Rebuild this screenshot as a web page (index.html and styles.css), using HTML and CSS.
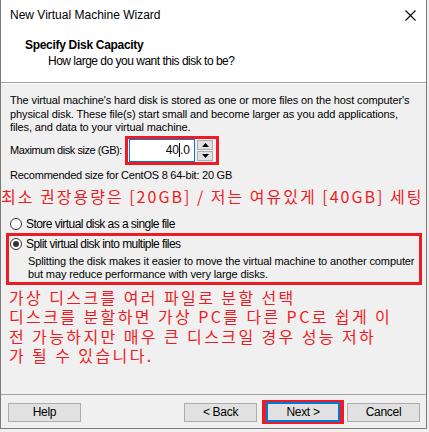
FILE: index.html
```html
<!DOCTYPE html>
<html>
<head>
<meta charset="utf-8">
<link rel="stylesheet" href="styles.css">
</head>
<body>
<div class="window">
  <div class="titlebar">
    <span class="title">New Virtual Machine Wizard</span>
    <svg class="close" width="11" height="11" viewBox="0 0 11 11"><path d="M0.5 0.5 L10.5 10.5 M10.5 0.5 L0.5 10.5" stroke="#000" stroke-width="1.1" fill="none"/></svg>
  </div>
  <div class="header">
    <div class="h-title">Specify Disk Capacity</div>
    <div class="h-sub">How large do you want this disk to be?</div>
  </div>
  <div class="content">
    <p class="intro">The virtual machine's hard disk is stored as one or more files on the host computer's<br>physical disk. These file(s) start small and become larger as you add applications,<br>files, and data to your virtual machine.</p>
    <div class="size-row">
      <span class="label">Maximum disk size (GB):</span>
      <div class="hl-box">
        <div class="input"><span>40</span><span class="caret"></span><span>.0</span></div>
        <div class="spin">
          <div class="spin-btn"><svg width="7" height="4" viewBox="0 0 7 4"><path d="M3.5 0 L7 4 L0 4 Z" fill="#000"/></svg></div>
          <div class="spin-btn"><svg width="7" height="4" viewBox="0 0 7 4"><path d="M0 0 L7 0 L3.5 4 Z" fill="#000"/></svg></div>
        </div>
      </div>
    </div>
    <p class="rec">Recommended size for CentOS 8 64-bit: 20 GB</p>
    <p class="note note1">최소 권장용량은 [20GB] / 저는 여유있게 [40GB] 세팅</p>
    <label class="radio-row first"><span class="radio"></span>Store virtual disk as a single file</label>
    <div class="hl-split">
      <label class="radio-row"><span class="radio checked"></span>Split virtual disk into multiple files</label>
      <p class="desc">Splitting the disk makes it easier to move the virtual machine to another computer<br>but may reduce performance with very large disks.</p>
    </div>
    <p class="note note2">가상 디스크를 여러 파일로 분할 선택<br>디스크를 분할하면 가상 PC를 다른 PC로 쉽게 이<br>전 가능하지만 매우 큰 디스크일 경우 성능 저하<br>가 될 수 있습니다.</p>
  </div>
  <div class="footer">
    <button class="btn">Help</button>
    <div class="spacer"></div>
    <button class="btn">&lt; Back</button>
    <div class="next-hl"><button class="btn btn-default">Next &gt;</button></div>
    <button class="btn">Cancel</button>
  </div>
</div>
</body>
</html>
```

FILE: styles.css
```css
html, body {
  margin: 0;
  padding: 0;
  background: #f0f0f0;
}
body {
  width: 429px;
  height: 432px;
  overflow: hidden;
  font-family: "Liberation Sans", Arial, sans-serif;
  color: #000;
}
.window {
  width: 427px;
  height: 429px;
  border-left: 1px solid #7a7a7a;
  border-right: 1px solid #7a7a7a;
  border-bottom: 1px solid #7a7a7a;
  background: #f0f0f0;
  display: flex;
  flex-direction: column;
  box-sizing: border-box;
}
.titlebar {
  height: 30px;
  flex: none;
  background: #fff;
  display: flex;
  align-items: center;
  padding: 0 9px;
}
.title {
  font-size: 12px;
  flex: 1;
  color: #000;
}
.close {
  margin-right: 1px;
}
.header {
  background: #fff;
  height: 53px;
  flex: none;
  border-bottom: 1px solid #a0a0a0;
  box-sizing: border-box;
  padding: 8px 0 0 24px;
}
.h-title {
  font-weight: bold;
  font-size: 12px;
  line-height: 15px;
  letter-spacing: -0.3px;
}
.h-sub {
  font-size: 12px;
  line-height: 15px;
  padding-left: 23px;
  margin-top: 1px;
  letter-spacing: -0.5px;
}
.content {
  flex: 1;
  padding: 0 9px;
  font-size: 11px;
  border-top: 1px solid #fff;
}
p { margin: 0; }
.intro {
  margin-top: 10px;
  line-height: 13.5px;
  white-space: nowrap;
  letter-spacing: -0.12px;
}
.size-row {
  display: flex;
  align-items: center;
  margin-top: 1px;
  height: 29px;
}
.label {
  width: 115px;
  white-space: nowrap;
  letter-spacing: -0.45px;
}
.hl-box {
  display: flex;
  align-items: center;
  border: 3px solid #ed1c24;
  padding: 0 3px 0 1px;
  height: 23px;
}
.input {
  width: 66px;
  height: 23px;
  background: #fff;
  border: 1px solid #0078d7;
  box-sizing: border-box;
  display: flex;
  align-items: center;
  justify-content: flex-end;
  padding-right: 4px;
  font-size: 12px;
}
.caret {
  display: inline-block;
  width: 1px;
  height: 14px;
  background: #000;
}
.spin {
  display: flex;
  flex-direction: column;
  gap: 1px;
  margin-left: 2px;
}
.spin-btn {
  width: 16px;
  height: 10px;
  background: #e1e1e1;
  border: 1px solid #adadad;
  box-sizing: border-box;
  display: flex;
  align-items: center;
  justify-content: center;
}
.rec {
  margin-top: 3px;
  line-height: 14px;
  letter-spacing: -0.24px;
}
.note {
  font-family: "Noto Sans CJK KR", sans-serif;
  color: #ed1c24;
  font-size: 16px;
  white-space: nowrap;
}
.note1 {
  margin-left: -9px;
  margin-top: 4px;
  line-height: 20px;
  letter-spacing: 2px;
}
.radio-row {
  display: flex;
  align-items: center;
  gap: 4px;
  height: 16px;
  font-size: 12px;
  letter-spacing: -0.55px;
  white-space: nowrap;
}
.radio-row.first {
  margin-top: 10px;
}
.radio {
  width: 12px;
  height: 12px;
  border: 1px solid #333;
  border-radius: 50%;
  background: #fff;
  box-sizing: border-box;
  position: relative;
  flex: none;
}
.radio.checked::after {
  content: "";
  position: absolute;
  left: 2px;
  top: 2px;
  width: 6px;
  height: 6px;
  border-radius: 50%;
  background: #333;
}
.hl-split {
  margin: 1px -5px 0 -4px;
  border: 3px solid #ed1c24;
  padding: 0 0 0 1px;
}
.desc {
  padding-left: 18px;
  margin-top: 3px;
  line-height: 13.5px;
  white-space: nowrap;
  letter-spacing: -0.12px;
}
.note2 {
  margin-top: 3px;
  margin-left: -1px;
  line-height: 19.5px;
  letter-spacing: 2.4px;
}
.footer {
  border-top: 1px solid #a0a0a0;
  height: 34px;
  flex: none;
  display: flex;
  align-items: center;
  padding: 1px 6px 0 7px;
  box-sizing: border-box;
}
.spacer { flex: 1; }
.btn {
  width: 73px;
  height: 19px;
  background: #e1e1e1;
  border: 1px solid #adadad;
  font-family: "Liberation Sans", Arial, sans-serif;
  font-size: 12px;
  letter-spacing: -0.3px;
  padding: 0;
  margin: 0;
  color: #000;
  flex: none;
}
.next-hl {
  border-style: solid;
  border-color: #ed1c24;
  border-width: 2px 4px;
  margin: 0 3px 0 5px;
  display: flex;
  flex: none;
}
.btn-default {
  border: 2px solid #0078d7;
  width: 74px;
  height: 20px;
}
```
